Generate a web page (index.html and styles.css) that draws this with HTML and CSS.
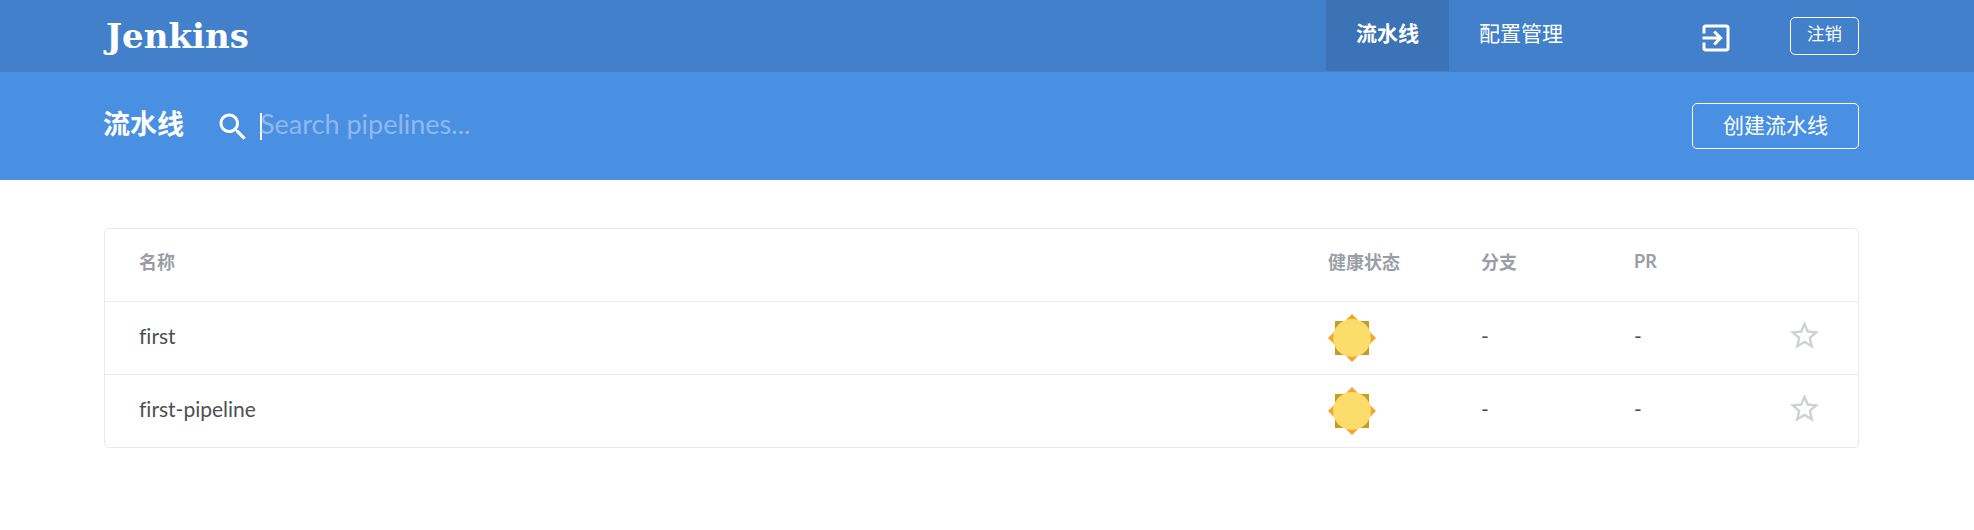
FILE: index.html
```html
<!DOCTYPE html>
<html lang="en">
<head>
  <meta charset="UTF-8" />
  <title>Jenkins</title>
  <link rel="stylesheet" href="styles.css">
</head>
<body>
  <header class="topbar">
    <div class="logo">Jenkins</div>
    <nav class="nav">
      <a class="nav-item active">流水线</a>
      <a class="nav-item">配置管理</a>
    </nav>
    <svg class="exit-icon" viewBox="0 0 24 24"><path d="M10.09 15.59L11.5 17l5-5-5-5-1.41 1.41L12.67 11H3v2h9.67l-2.58 2.59zM19 3H5c-1.11 0-2 .9-2 2v4h2V5h14v14H5v-4H3v4c0 1.1.89 2 2 2h14c1.1 0 2-.9 2-2V5c0-1.1-.9-2-2-2z"/></svg>
    <button class="btn btn-small">注销</button>
  </header>

  <section class="subbar">
    <h1 class="title">流水线</h1>
    <svg class="search-icon" viewBox="0 0 24 24"><path d="M15.5 14h-.79l-.28-.27C15.41 12.59 16 11.11 16 9.5 16 5.91 13.09 3 9.5 3S3 5.91 3 9.5 5.91 16 9.5 16c1.61 0 3.09-.59 4.23-1.57l.27.28v.79l5 4.99L20.49 19l-4.99-5zm-6 0C7.01 14 5 11.99 5 9.5S7.01 5 9.5 5 14 7.01 14 9.5 11.99 14 9.5 14z"/></svg>
    <div class="search">
      <span class="caret"></span>
      <span class="placeholder">Search pipelines...</span>
    </div>
    <button class="btn btn-create">创建流水线</button>
  </section>

  <main class="content">
    <div class="table">
      <div class="row head">
        <div class="cell-name">名称</div>
        <div>健康状态</div>
        <div>分支</div>
        <div>PR</div>
        <div></div>
      </div>
      <div class="row">
        <div class="cell-name">first</div>
        <div class="cell-health">
          <svg class="sun" viewBox="0 0 48 48">
            <rect x="7" y="7" width="34" height="34" fill="#c99b24"/>
            <polygon points="24,0 48,24 24,48 0,24" fill="#f6a52a"/>
            <circle cx="24" cy="24" r="19" fill="#fcdc6a"/>
          </svg>
        </div>
        <div>-</div>
        <div>-</div>
        <div class="cell-star">
          <svg class="star" viewBox="0 0 24 24"><path d="M22 9.24l-7.19-.62L12 2 9.19 8.63 2 9.24l5.46 4.73L5.82 21 12 17.27 18.18 21l-1.63-7.03L22 9.24zM12 15.4l-3.76 2.27 1-4.28-3.32-2.88 4.38-.38L12 6.1l1.71 4.04 4.38.38-3.32 2.88 1 4.28L12 15.4z"/></svg>
        </div>
      </div>
      <div class="row">
        <div class="cell-name">first-pipeline</div>
        <div class="cell-health">
          <svg class="sun" viewBox="0 0 48 48">
            <rect x="7" y="7" width="34" height="34" fill="#c99b24"/>
            <polygon points="24,0 48,24 24,48 0,24" fill="#f6a52a"/>
            <circle cx="24" cy="24" r="19" fill="#fcdc6a"/>
          </svg>
        </div>
        <div>-</div>
        <div>-</div>
        <div class="cell-star">
          <svg class="star" viewBox="0 0 24 24"><path d="M22 9.24l-7.19-.62L12 2 9.19 8.63 2 9.24l5.46 4.73L5.82 21 12 17.27 18.18 21l-1.63-7.03L22 9.24zM12 15.4l-3.76 2.27 1-4.28-3.32-2.88 4.38-.38L12 6.1l1.71 4.04 4.38.38-3.32 2.88 1 4.28L12 15.4z"/></svg>
        </div>
      </div>
    </div>
  </main>
</body>
</html>
```

FILE: styles.css
```css
* {
  box-sizing: border-box;
}

html, body {
  margin: 0;
  padding: 0;
  background: #fff;
  font-family: Lato, "Noto Sans CJK SC", sans-serif;
  font-variant-ligatures: none;
  color: #4f4f55;
}

.topbar {
  height: 72px;
  padding: 0 115px 0 104px;
  display: flex;
  align-items: center;
  background-color: #4280cb;
  color: #fff;
}

.logo {
  font-family: "DejaVu Serif", serif;
  font-size: 34px;
  font-weight: 700;
  margin-left: 2px;
  margin-right: auto;
}

.nav {
  display: flex;
  align-self: stretch;
  margin-right: 105px;
}

.nav-item {
  display: flex;
  align-items: center;
  padding: 0 30px 7px;
  height: 71px;
  font-size: 21px;
}

.nav-item.active {
  background-color: #3c72b6;
  font-weight: 700;
}

.exit-icon {
  width: 36px;
  height: 36px;
  fill: #fff;
  margin: 3px 56px 0 0;
}

.btn {
  background: transparent;
  border: 1px solid #fff;
  border-radius: 5px;
  color: #fff;
  font-family: inherit;
  padding: 0;
}

.btn-small {
  width: 69px;
  height: 38px;
  padding-bottom: 7px;
  font-size: 17.5px;
}

.subbar {
  height: 108px;
  padding: 0 115px 0 104px;
  display: flex;
  align-items: center;
  background-color: #4a90e2;
  color: #fff;
}

.title {
  margin: 0 31px 0 -1px;
  padding-bottom: 7px;
  font-size: 27px;
  font-weight: 700;
}

.search-icon {
  width: 36px;
  height: 36px;
  fill: #fff;
  margin: 2px 9px 0 0;
}

.search {
  display: flex;
  align-items: center;
  margin-right: auto;
}

.caret {
  width: 2px;
  height: 27px;
  margin-right: -2px;
  background-color: #fff;
}

.placeholder {
  padding-bottom: 6px;
  font-size: 27px;
  color: #8fb9ee;
}

.btn-create {
  width: 167px;
  height: 46px;
  padding-bottom: 4px;
  font-size: 21px;
}

.content {
  padding: 48px 115px 0 104px;
}

.table {
  border: 1px solid #e8e9ed;
  border-radius: 5px;
}

.row {
  display: grid;
  grid-template-columns: 1223px 153px 153px 153px 1fr;
  align-items: center;
  height: 73px;
  border-bottom: 1px solid #e8e9ed;
  font-size: 21px;
}

.row:last-child {
  height: 72px;
  border-bottom: 0;
}

.row > div {
  padding-bottom: 5px;
}

.head {
  font-size: 18px;
  font-weight: 700;
  color: #9b9ea6;
}

.row.head > div {
  padding-bottom: 8px;
}

.row > .cell-health {
  padding-bottom: 0;
}

.row > .cell-name {
  padding-left: 34px;
}

.row > .cell-star {
  display: flex;
  padding-bottom: 6px;
}

.sun {
  display: block;
  width: 48px;
  height: 48px;
}

.star {
  display: block;
  width: 35px;
  height: 35px;
  fill: #cdd0d6;
}
```
